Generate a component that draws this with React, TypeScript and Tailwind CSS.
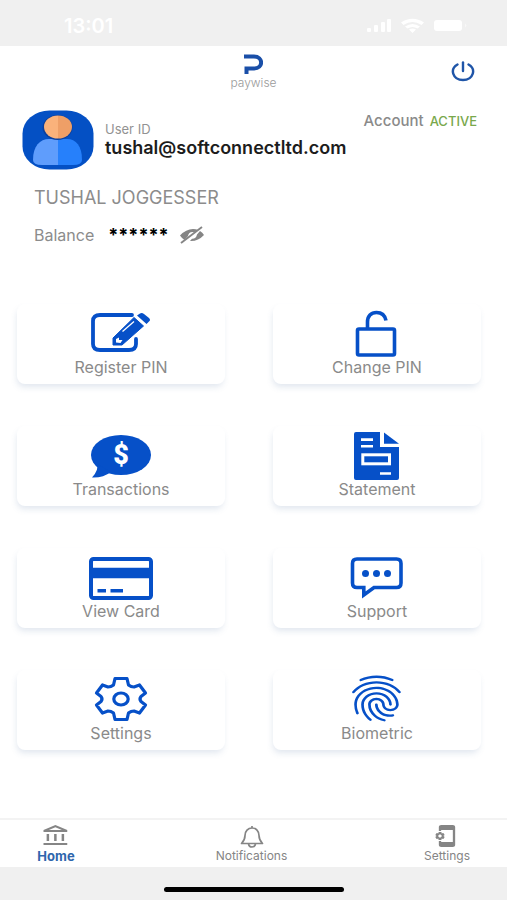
import React, { useState } from 'react';
import { MdAppSettingsAlt, MdFingerprint, MdOutlineAccountBalance } from 'react-icons/md';

const BLUE = '#0650c8';

interface MenuItem {
  label: string;
  icon: React.ReactNode;
}

function TileIcon({ children }: { children: React.ReactNode }) {
  return (
    <svg viewBox="0 0 64 50" className="w-16 h-[50px] shrink-0" fill="none" aria-hidden="true">
      {children}
    </svg>
  );
}

const menu: MenuItem[] = [
  {
    label: 'Register PIN',
    icon: (
      <TileIcon>
        <path d="M43 7H11Q4 7 4 13V36Q4 42 11 42H40Q47 42 47 36V31" stroke={BLUE} strokeWidth="3.8" strokeLinecap="round" />
        <path d="M24 37V30L45 9.5L54.5 18L33 37Z" fill={BLUE} stroke={BLUE} strokeLinejoin="round" />
        <path d="M48 7.5L51 5.5Q53 4.500 55 6L60 10Q62 12 60 13.5L57.5 16Z" fill={BLUE} />
        <path d="M33.5 23.5L45 13.5" stroke="#fff" strokeWidth="1.3" />
        <path d="M27 34.5V31L30 29.5V32H33.5L31.5 35Z" fill="#fff" />
      </TileIcon>
    ),
  },
  {
    label: 'Change PIN',
    icon: (
      <TileIcon>
        <rect x="12.5" y="21" width="37" height="26" rx="1.5" stroke={BLUE} strokeWidth="3.6" />
        <path d="M22.5 21V14C22.5 8 26 4.500 31.5 4.500C37 4.500 40 7.500 41 12.5" stroke={BLUE} strokeWidth="3.6" />
      </TileIcon>
    ),
  },
  {
    label: 'Transactions',
    icon: (
      <TileIcon>
        <ellipse cx="32" cy="25" rx="30" ry="20" fill={BLUE} />
        <path d="M8 34Q10 40 3 47.5Q14 48 22 42Z" fill={BLUE} />
        <text x="32" y="34" textAnchor="middle" fontSize="27" fontWeight="900" fontFamily="Roboto, sans-serif" fill="#fff">$</text>
      </TileIcon>
    ),
  },
  {
    label: 'Statement',
    icon: (
      <TileIcon>
        <path d="M11 2H35V17H54V48Q54 50 52 50H11Q9 50 9 48V4Q9 2 11 2Z" fill={BLUE} />
        <path d="M39 2.5L54 13.7H39Z" fill={BLUE} />
        <path d="M16 9.6H28M16 16.2H28M35 43.5H46" stroke="#fff" strokeWidth="2.6" />
        <rect x="17.8" y="24.8" width="26.7" height="9" stroke="#fff" strokeWidth="3" />
      </TileIcon>
    ),
  },
  {
    label: 'View Card',
    icon: (
      <TileIcon>
        <rect x="2" y="7" width="60" height="39" rx="2.5" stroke={BLUE} strokeWidth="4" />
        <path d="M2 21H62" stroke={BLUE} strokeWidth="10.5" />
        <path d="M8.5 38.8H17M21.5 38.8H34" stroke={BLUE} strokeWidth="3.6" />
      </TileIcon>
    ),
  },
  {
    label: 'Support',
    icon: (
      <TileIcon>
        <path
          d="M12 7H51.5Q56 7 56 11.5V31Q56 35.5 51.5 35.5H29L18.8 43V35.5H12Q7.5 35.5 7.5 31V11.5Q7.5 7 12 7Z"
          stroke={BLUE}
          strokeWidth="3.6"
        />
        <circle cx="20.5" cy="21.5" r="3.5" fill={BLUE} />
        <circle cx="31.5" cy="21.5" r="3.5" fill={BLUE} />
        <circle cx="42.5" cy="21.5" r="3.5" fill={BLUE} />
      </TileIcon>
    ),
  },
  {
    label: 'Settings',
    icon: (
      <TileIcon>
        <path
          d="M26 4.500H38L39.5 11Q42 13 45 13L50.5 11L56.5 19L52 22.5Q50 25 52 27.5L56.5 31L50.5 39L45 37Q42 37 39.5 39L38 45.5H26L24.5 39Q22 37 19 37L13.5 39L7.5 31L12 27.5Q14 25 12 22.5L7.5 19L13.5 11L19 13Q22 13 24.5 11Z"
          stroke={BLUE}
          strokeWidth="3.2"
          strokeLinejoin="round"
        />
        <ellipse cx="32" cy="25" rx="7.2" ry="6" stroke={BLUE} strokeWidth="3.2" />
      </TileIcon>
    ),
  },
  {
    label: 'Biometric',
    icon: (
      <TileIcon>
        <MdFingerprint x="-1" y="-3" color={BLUE} preserveAspectRatio="none" className="w-[65px] h-[55px]" />
      </TileIcon>
    ),
  },
];

function StatusBar() {
  return (
    <div className="h-[46px] shrink-0 bg-[#f0f0f0] pl-16 pr-[38px] pt-1.5 flex items-center justify-between text-white">
      <span className="text-[20px] leading-6 font-semibold">13:01</span>
      <svg viewBox="0 0 102 16" className="w-[102px] h-4" fill="currentColor" aria-hidden="true">
        <rect x="0" y="10" width="4" height="4" rx="1" />
        <rect x="7" y="7" width="4" height="7" rx="1" />
        <rect x="14" y="4" width="4" height="10" rx="1" />
        <rect x="20" y="1" width="4" height="13" rx="1" />
        <path d="M34 4.500Q45.5 -3 57 4.500L54.5 7Q45.5 1 36.5 7Z" />
        <path d="M38 8.5Q45.5 3.5 53 8.5L50.5 10.5Q45.5 7.5 40.5 10.5Z" />
        <path d="M42 11.5Q45.5 9.5 49 11.5L45.5 15Z" />
        <rect x="67" y="2" width="28" height="11" rx="3" />
        <path d="M98 5.5Q101 7.5 98 9.5Z" opacity="0.5" />
      </svg>
    </div>
  );
}

function Header() {
  return (
    <header className="h-[52px] shrink-0 px-8 grid grid-cols-3 items-center">
      <div className="col-start-2 justify-self-center flex flex-col items-center">
        <svg viewBox="0 0 20 22" className="w-5 h-[22px]" fill="none" aria-hidden="true">
          <path d="M1 3.500H11C20.500 3.500 20.500 15.500 11 15.500H3.500V21" stroke="#1a4fa8" strokeWidth="4" />
        </svg>
        <span className="text-[12px] leading-4 font-light text-[#9a9a9a]">paywise</span>
      </div>
      <button type="button" aria-label="Log out" className="justify-self-end cursor-pointer">
        <svg viewBox="0 0 24 22" className="w-6 h-[22px]" fill="none" stroke="#1f55a8" strokeWidth="2.4" strokeLinecap="round">
          <path d="M6.500 3.500C-1.500 8 1.500 19 12 19S25.500 8 17.500 3.500" />
          <path d="M12 1.500V10" />
        </svg>
      </button>
    </header>
  );
}

function Avatar() {
  return (
    <svg viewBox="0 0 72 60" className="w-[72px] h-[60px] shrink-0" role="img" aria-label="Profile">
      <rect x="0.5" y="0.5" width="71" height="59" rx="27" ry="23" fill="#0450c4" />
      <path d="M11 50C11 36 18 29 27 29H36V55H20Q11 55 11 50Z" fill="#5f9dfc" />
      <path d="M36 29H45C54 29 60 36 60 50Q60 55 51 55H36Z" fill="#2680fb" />
      <ellipse cx="35.5" cy="17.5" rx="15" ry="12.5" fill="#0a3f9e" />
      <path d="M36 5.5A14 11.5 0 0 0 36 28.5Z" fill="#fab27b" />
      <path d="M36 5.5A14 11.5 0 0 1 36 28.5Z" fill="#ee9f67" />
    </svg>
  );
}

function Profile({ name, email }: { name: string; email: string }) {
  const [showBalance, setShowBalance] = useState(false);

  return (
    <section className="pl-[22px] pr-[30px] pt-3">
      <div className="flex">
        <Avatar />
        <div className="ml-[11px] flex-1 min-w-0">
          <p className="text-right text-[15px] leading-[22px] font-medium text-[#8a8a8a]">
            Account <span className="ml-0.5 text-[13px] text-[#79a84c]">ACTIVE</span>
          </p>
          <p className="-mt-[11px] text-[13px] leading-4 text-[#929292]">User ID</p>
          <p className="text-[18px] leading-[22px] font-semibold text-[#1c1c1c]">{email}</p>
        </div>
      </div>
      <h1 className="mt-[18px] ml-3 text-[18px] leading-5 text-[#8c8c8c]">{name}</h1>
      <div className="mt-4 ml-3 flex items-center leading-[22px]">
        <span className="text-[16px] text-[#8c8c8c]">Balance</span>
        <span className="ml-3.5 w-[59px] text-[18px] font-bold text-black">{showBalance ? '0.00' : '******'}</span>
        <button type="button" aria-label="Show balance" onClick={() => setShowBalance(v => !v)} className="ml-3 cursor-pointer">
          <svg viewBox="0 0 26 20" className="w-[26px] h-5" fill="none">
            <path d="M1 10.5Q7 4 14 4Q17 4 19 5L16.5 7.5Q10 5.5 9 11L5.5 15Q3 13.5 1 10.5Z" fill="#858585" />
            <path d="M21 6Q23.5 7.5 25 10Q19 16.5 11 16L13 13.8Q17 14 18 9.5Z" fill="#858585" />
            <path d="M2 18L23 2" stroke="#858585" strokeWidth="2" />
          </svg>
        </button>
      </div>
    </section>
  );
}

function MenuTile({ label, icon }: MenuItem) {
  return (
    <button
      type="button"
      className="h-20 pb-2 rounded-lg bg-white shadow-[-1px_4px_6px_-1px_rgba(80,110,160,0.17)] flex flex-col items-center justify-end cursor-pointer"
    >
      {icon}
      <span className="text-[16px] leading-[18px] text-[#8a8a8a]">{label}</span>
    </button>
  );
}

function TabBar() {
  return (
    <nav className="h-[49px] shrink-0 border-t-2 border-[#f3f3f3] pl-5 pr-6 flex justify-between text-[#858585]">
      <a href="#home" className="w-[72px] pt-1 flex flex-col items-center">
        <MdOutlineAccountBalance preserveAspectRatio="none" className="w-[30px] h-6" />
        <span className="text-[13px] leading-4 font-bold text-[#2f66ad]">Home</span>
      </a>
      <a href="#notifications" className="w-[72px] pt-1.5 flex flex-col items-center">
        <svg viewBox="0 0 24 22" className="w-6 h-[22px]" fill="none" stroke="currentColor" strokeWidth="1.7" aria-hidden="true">
          <path d="M12 0V2M1.500 17.500Q5 14 5 9.5C5 5 8 2 12 2S19 5 19 9.5Q19 14 22.500 17.500Z" strokeLinejoin="round" />
          <path d="M8.500 18Q9 21 12 21T15.500 18" />
        </svg>
        <span className="text-[12px] leading-4">Notifications</span>
      </a>
      <a href="#settings" className="w-[72px] pt-1 flex flex-col items-center">
        <MdAppSettingsAlt preserveAspectRatio="none" className="w-7 h-6 -scale-x-100" />
        <span className="text-[12px] leading-4">Settings</span>
      </a>
    </nav>
  );
}

export default function App() {
  return (
    <div className="min-h-screen flex flex-col bg-white font-['Inter','Liberation_Sans',sans-serif]">
      <StatusBar />
      <Header />
      <main className="flex-1">
        <Profile name="TUSHAL JOGGESSER" email="tushal@softconnectltd.com" />
        <div className="mt-[58px] mb-10 pl-[17px] pr-[26px] grid grid-cols-2 gap-x-12 gap-y-[42px]">
          {menu.map(item => (
            <MenuTile key={item.label} label={item.label} icon={item.icon} />
          ))}
        </div>
      </main>
      <TabBar />
      <footer className="h-[33px] shrink-0 bg-[#f0f0f0] flex justify-center items-start pt-5">
        <div className="w-[180px] h-[5px] rounded-full bg-black" />
      </footer>
    </div>
  );
}
